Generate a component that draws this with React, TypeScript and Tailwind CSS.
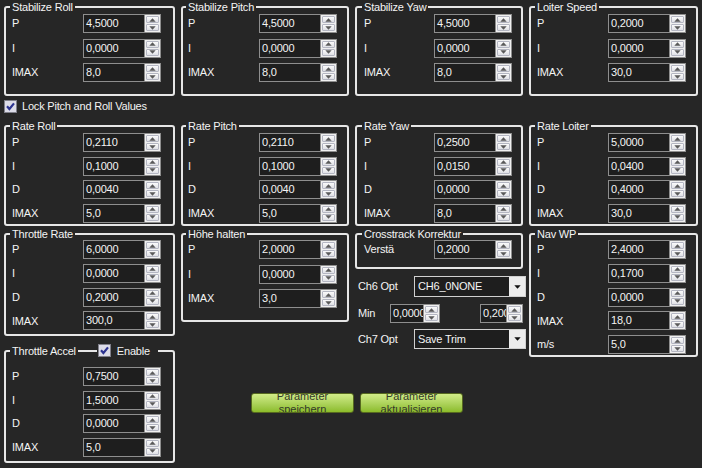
import React from "react";

const Up = () => (
  <svg width="7" height="4" viewBox="0 0 7 4">
    <path d="M3.5 0.3L6.7 3.8H0.3Z" fill="#5a5a5a" />
  </svg>
);
const Down = ({ c = "#5a5a5a" }: { c?: string }) => (
  <svg width="7" height="4" viewBox="0 0 7 4">
    <path d="M0.3 0.2H6.7L3.5 3.7Z" fill={c} />
  </svg>
);

function Spinner() {
  return (
    <div className="flex w-[16px] shrink-0 flex-col gap-[1px] border-l border-[#8e8e8e] bg-[#f0f0f0] p-[1px]">
      <div className="flex flex-1 items-center justify-center rounded-[1px] border border-[#b4b6c2] bg-gradient-to-b from-[#fbfbfb] to-[#e0e1e6]">
        <Up />
      </div>
      <div className="flex flex-1 items-center justify-center rounded-[1px] border border-[#b4b6c2] bg-gradient-to-b from-[#fbfbfb] to-[#e0e1e6]">
        <Down />
      </div>
    </div>
  );
}

function Spin({ value, w = "w-[78px]" }: { value: string; w?: string }) {
  return (
    <div className={`flex h-[19px] shrink-0 border border-[#8e8e8e] bg-[#1e1e1e] ${w}`}>
      <div className="min-w-0 flex-1 overflow-hidden whitespace-nowrap pl-[2px] leading-[17px] text-[#f4f4f4]">
        {value}
      </div>
      <Spinner />
    </div>
  );
}

function Row({ label, value, lw = "w-[71px]" }: { label: string; value: string; lw?: string }) {
  return (
    <div className="flex h-[19px] items-center">
      <div className={`shrink-0 ${lw}`}>{label}</div>
      <Spin value={value} />
    </div>
  );
}

function Group({
  title,
  className,
  children,
}: {
  title: React.ReactNode;
  className: string;
  children: React.ReactNode;
}) {
  return (
    <fieldset className={`shrink-0 rounded-[3px] border-2 border-[#e6e6e6] ${className}`}>
      <legend className="-ml-[2px] px-[2px] leading-[12px]">{title}</legend>
      {children}
    </fieldset>
  );
}

function Check() {
  return (
    <svg width="13" height="13" viewBox="0 0 13 13" className="shrink-0">
      <rect x="0.5" y="0.5" width="12" height="12" fill="#dcdce8" stroke="#80808a" />
      <path d="M3 6.3L5.4 9L10 3.4" fill="none" stroke="#2c3390" strokeWidth="2.2" />
    </svg>
  );
}

function Combo({ value }: { value: string }) {
  return (
    <div className="flex h-full w-[112px] shrink-0 border border-[#d0d0d0] bg-[#1e1e1e]">
      <div className="flex min-w-0 flex-1 items-center overflow-hidden whitespace-nowrap pl-[3px]">{value}</div>
      <div className="flex w-[16px] items-center justify-center bg-[#ececec]">
        <Down c="#111" />
      </div>
    </div>
  );
}

function Btn({ a, b }: { a: string; b: string }) {
  return (
    <div className="flex h-[20px] w-[103px] flex-col items-center justify-center overflow-hidden rounded-[3px] border border-[#56691f] bg-gradient-to-b from-[#d2ec88] to-[#8cbc28] text-center leading-[13px] text-[#34392a]">
      <div className="text-[#34392a]">{a}</div>
      <div className="text-[#34392a]">{b}</div>
    </div>
  );
}

export default function App() {
  return (
    <div className="h-[468px] w-[702px] overflow-hidden bg-[#262626] pl-[4px] pt-[1px] font-['Liberation_Sans',Arial,sans-serif] text-[11px] tracking-[-0.2px] text-[#f4f4f4]">
      {/* Row 1 */}
      <div className="flex gap-[6px]">
        <Group title="Stabilize Roll" className="h-[95px] w-[171px] pl-[6px]">
          <div className="flex flex-col gap-[5.5px] pt-[1px]">
            <Row label="P" value="4,5000" />
            <Row label="I" value="0,0000" />
            <Row label="IMAX" value="8,0" />
          </div>
        </Group>
        <Group title="Stabilize Pitch" className="h-[95px] w-[168px] pl-[5px]">
          <div className="flex flex-col gap-[5.5px] pt-[1px]">
            <Row label="P" value="4,5000" />
            <Row label="I" value="0,0000" />
            <Row label="IMAX" value="8,0" />
          </div>
        </Group>
        <Group title="Stabilize Yaw" className="h-[95px] w-[168px] pl-[7px]">
          <div className="flex flex-col gap-[5.5px] pt-[1px]">
            <Row label="P" value="4,5000" lw="w-[70px]" />
            <Row label="I" value="0,0000" lw="w-[70px]" />
            <Row label="IMAX" value="8,0" lw="w-[70px]" />
          </div>
        </Group>
        <Group title="Loiter Speed" className="h-[95px] w-[169px] pl-[6px]">
          <div className="flex flex-col gap-[5.5px] pt-[1px]">
            <Row label="P" value="0,2000" />
            <Row label="I" value="0,0000" />
            <Row label="IMAX" value="30,0" />
          </div>
        </Group>
      </div>

      {/* Lock checkbox */}
      <div className="mt-[4px] flex h-[13px] items-center gap-[5px]">
        <Check />
        <span>Lock Pitch and Roll Values</span>
      </div>

      {/* Row 2 */}
      <div className="mt-[7px] flex gap-[6px]">
        <Group title="Rate Roll" className="h-[106px] w-[171px] pl-[6px]">
          <div className="flex flex-col gap-[4.5px] pt-[1px]">
            <Row label="P" value="0,2110" />
            <Row label="I" value="0,1000" />
            <Row label="D" value="0,0040" />
            <Row label="IMAX" value="5,0" />
          </div>
        </Group>
        <Group title="Rate Pitch" className="h-[106px] w-[168px] pl-[5px]">
          <div className="flex flex-col gap-[4.5px] pt-[1px]">
            <Row label="P" value="0,2110" />
            <Row label="I" value="0,1000" />
            <Row label="D" value="0,0040" />
            <Row label="IMAX" value="5,0" />
          </div>
        </Group>
        <Group title="Rate Yaw" className="h-[106px] w-[168px] pl-[7px]">
          <div className="flex flex-col gap-[4.5px] pt-[1px]">
            <Row label="P" value="0,2500" lw="w-[70px]" />
            <Row label="I" value="0,0150" lw="w-[70px]" />
            <Row label="D" value="0,0000" lw="w-[70px]" />
            <Row label="IMAX" value="8,0" lw="w-[70px]" />
          </div>
        </Group>
        <Group title="Rate Loiter" className="h-[106px] w-[169px] pl-[6px]">
          <div className="flex flex-col gap-[4.5px] pt-[1px]">
            <Row label="P" value="5,0000" />
            <Row label="I" value="0,0400" />
            <Row label="D" value="0,4000" />
            <Row label="IMAX" value="30,0" />
          </div>
        </Group>
      </div>

      {/* Bottom area */}
      <div className="mt-[2px] flex items-start gap-[6px]">
        <div className="flex w-[171px] shrink-0 flex-col">
          <Group title="Throttle Rate" className="h-[108px] w-[171px] pl-[6px]">
            <div className="flex flex-col gap-[4.75px]">
              <Row label="P" value="6,0000" />
              <Row label="I" value="0,0000" />
              <Row label="D" value="0,2000" />
              <Row label="IMAX" value="300,0" />
            </div>
          </Group>
          <Group
            title={
              <div className="flex h-[13px] items-center">
                <span className="pr-[2px]">Throttle Accel</span>
                <span className="h-[2px] w-[19px] bg-[#e6e6e6]" />
                <span className="ml-[1px]">
                  <Check />
                </span>
                <span className="ml-[6px] pr-[6px]">Enable</span>
              </div>
            }
            className="mt-[8px] h-[119px] w-[171px] pl-[6px]"
          >
            <div className="flex flex-col gap-[4.5px] pt-[10px]">
              <Row label="P" value="0,7500" />
              <Row label="I" value="1,5000" />
              <Row label="D" value="0,0000" />
              <Row label="IMAX" value="5,0" />
            </div>
          </Group>
        </div>

        <div className="flex flex-col">
          <div className="flex items-start gap-[6px]">
            <Group title="Höhe halten" className="h-[94px] w-[168px] pl-[5px]">
              <div className="flex flex-col gap-[5.5px]">
                <Row label="P" value="2,0000" />
                <Row label="I" value="0,0000" />
                <Row label="IMAX" value="3,0" />
              </div>
            </Group>

            <div className="flex w-[168px] shrink-0 flex-col">
              <Group title="Crosstrack Korrektur" className="h-[41px] w-[168px] pl-[7px]">
                <Row label="Verstä" value="0,2000" lw="w-[70px]" />
              </Group>
              <div className="mt-[7px] flex h-[21px] items-center pl-[3px]">
                <div className="w-[56px] shrink-0">Ch6 Opt</div>
                <Combo value="CH6_0NONE" />
              </div>
              <div className="mt-[7px] flex h-[19px] items-center pl-[3px]">
                <div className="w-[32px] shrink-0">Min</div>
                <Spin value="0,0000" w="w-[50px]" />
                <div className="ml-[40px]">
                  <Spin value="0,2000" w="w-[43px]" />
                </div>
              </div>
              <div className="mt-[6px] flex h-[20px] items-center pl-[3px]">
                <div className="w-[56px] shrink-0">Ch7 Opt</div>
                <Combo value="Save Trim" />
              </div>
            </div>

            <Group title="Nav WP" className="h-[129px] w-[169px] pl-[6px]">
              <div className="flex flex-col gap-[4.75px]">
                <Row label="P" value="2,4000" />
                <Row label="I" value="0,1700" />
                <Row label="D" value="0,0000" />
                <Row label="IMAX" value="18,0" />
                <Row label="m/s" value="5,0" />
              </div>
            </Group>
          </div>

          <div className="ml-[70px] mt-[36px] flex gap-[6px] tracking-normal">
            <Btn a="Parameter" b="speichern" />
            <Btn a="Parameter" b="aktualisieren" />
          </div>
        </div>
      </div>
    </div>
  );
}
